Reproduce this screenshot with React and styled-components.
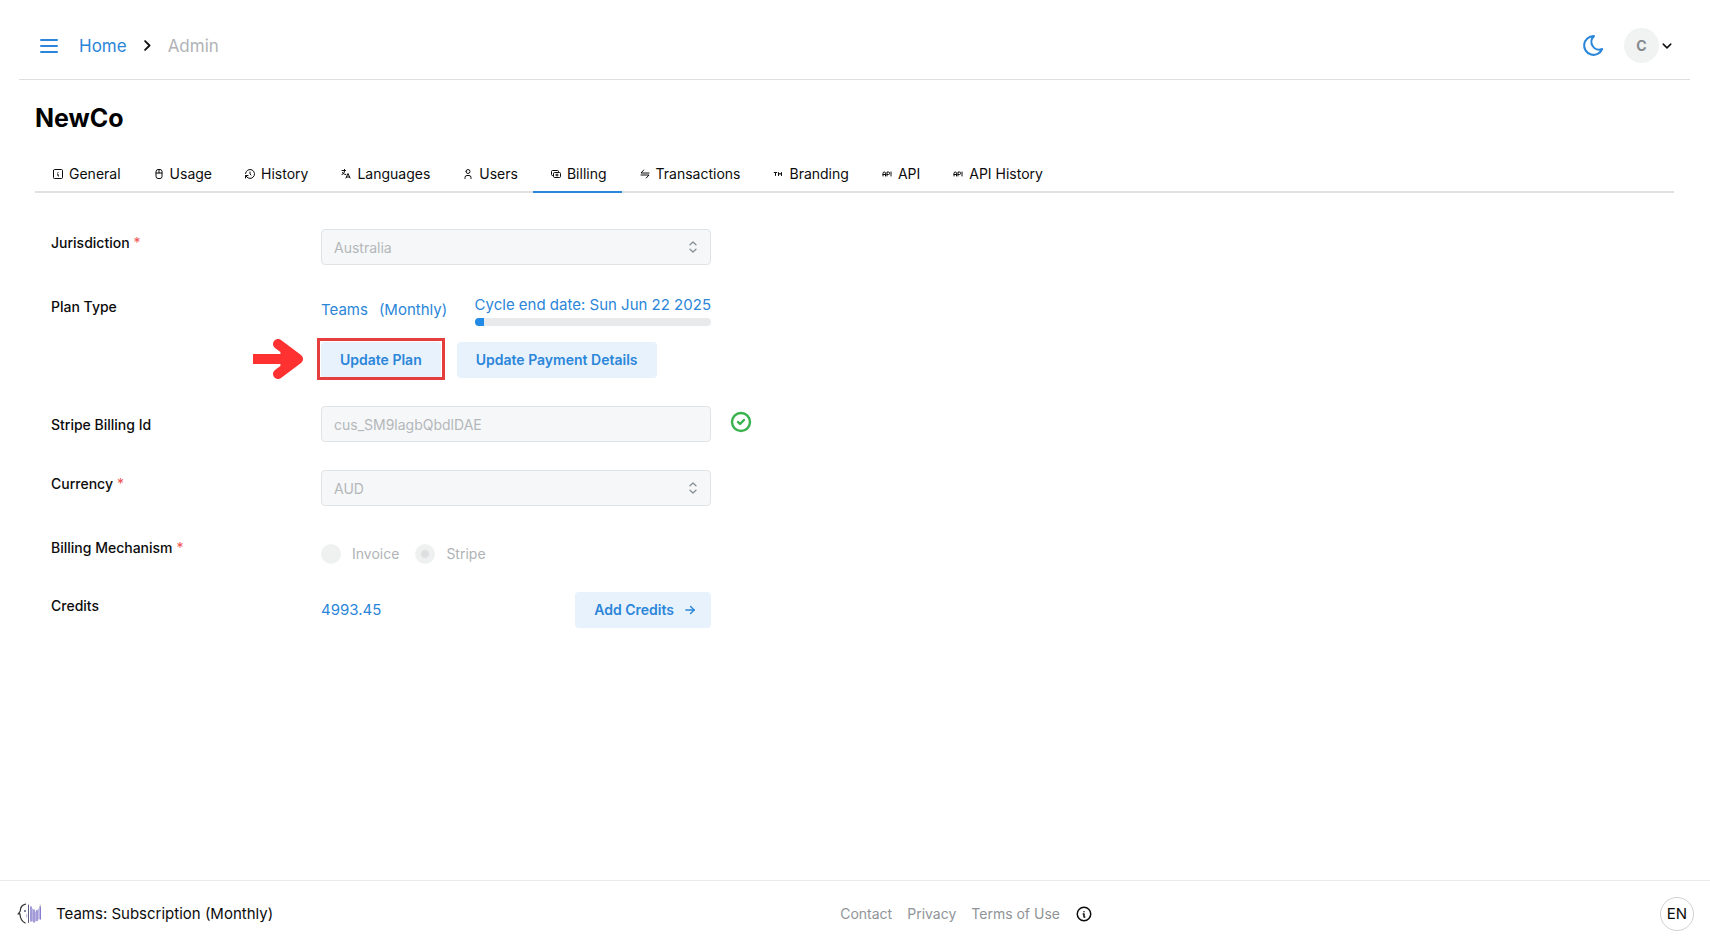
import React from "react";
import styled, { createGlobalStyle } from "styled-components";
import {
  TbInfoSquare, TbMouse2, TbHistory, TbLanguage, TbUser, TbCash, TbTransfer,
  TbTrademark, TbApi, TbInfoCircle, TbCircleCheck, TbArrowRight, TbMoon,
} from "react-icons/tb";

const blue = "#2b86d9";
const lightBlue = "#e8f2fc";
const muted = "#b0b3b6";

const GlobalStyle = createGlobalStyle`
  *, *::before, *::after { box-sizing: border-box; }
  body {
    margin: 0;
    background: #fff;
    color: #0c0c0c;
    font-family: Inter, "Liberation Sans", sans-serif;
    font-size: 14px;
    line-height: 22px;
  }
  button, select, input { font: inherit; }
  a { color: inherit; text-decoration: none; }
  svg { display: block; flex: none; }
`;

const Page = styled.div`
  min-height: 100vh;
  display: flex;
  flex-direction: column;
`;

const Header = styled.header`
  display: flex;
  align-items: center;
  justify-content: space-between;
  height: 80px;
  margin: 0 20px 0 19px;
  padding: 12px 18px 0 20px;
  border-bottom: 1px solid #dedfe0;
`;

const Group = styled.div`
  display: flex;
  align-items: center;
  gap: ${(p) => p.$gap}px;
`;

const IconButton = styled.button`
  display: flex;
  align-items: center;
  padding: 0;
  border: 0;
  background: none;
  color: ${(p) => p.$color || "#0c0c0c"};
  cursor: pointer;
`;

const Breadcrumbs = styled.nav`
  display: flex;
  align-items: center;
  gap: 15px;
  font-size: 17px;
  line-height: 26px;
  color: ${muted};
  a { color: ${blue}; }
`;

const UserButton = styled(IconButton)`
  gap: 3px;
`;

const Avatar = styled.span`
  display: flex;
  align-items: center;
  justify-content: center;
  width: 35px;
  height: 35px;
  border-radius: 50%;
  background: #f1f2f2;
  color: #868a8d;
  font-weight: 700;
`;

const Main = styled.main`
  flex: 1;
  padding: 22px 36px 36px 35px;
`;

const Title = styled.h1`
  margin: 0 0 21px;
  font-size: 25px;
  line-height: 32px;
  font-weight: 700;
  color: #000;
`;

const TabList = styled.div`
  display: flex;
  border-bottom: 2px solid #dfe1e3;
`;

const Tab = styled.button`
  display: flex;
  align-items: center;
  gap: 5px;
  height: 38px;
  margin-bottom: -2px;
  padding: 2px 15px 0 17px;
  border: 0;
  border-bottom: 2px solid ${(p) => (p.$active ? blue : "transparent")};
  background: none;
  color: #0c0c0c;
  white-space: nowrap;
  cursor: pointer;
`;

const Form = styled.form`
  display: flex;
  flex-direction: column;
  gap: 28px;
  padding: 36px 16px 0;
`;

const Row = styled.div`
  display: grid;
  grid-template-columns: 270px 390px auto;
  justify-content: start;
  align-items: ${(p) => (p.$center ? "center" : "start")};
`;

const Label = styled.label`
  padding-top: ${(p) => (p.$flush ? 1 : 3)}px;
  font-weight: 500;
`;

const Required = styled.span`
  margin-left: 4px;
  color: #f05252;
  font-weight: 400;
`;

const SelectWrap = styled.div`
  display: flex;
  align-items: center;
  position: relative;
  svg {
    position: absolute;
    right: 10px;
    pointer-events: none;
  }
`;

const fieldStyle = `
  width: 100%;
  height: 36px;
  margin: 0;
  padding: 1px 12px 0;
  border: 1px solid #e0e3e6;
  border-radius: 4px;
  background: #f6f7f9;
  color: #b4b7ba;
  opacity: 1;
`;

const Select = styled.select`
  ${fieldStyle}
  appearance: none;
`;

const Input = styled.input`
  ${fieldStyle}
`;

const Verified = styled.span`
  margin: 0 0 4px 18px;
  color: #37b24d;
`;

const Stack = styled.div`
  display: flex;
  flex-direction: column;
  gap: 16px;
`;

const Between = styled.div`
  display: flex;
  align-items: center;
  justify-content: space-between;
`;

const BlueText = styled.span`
  font-size: 15px;
  line-height: 24px;
  color: ${blue};
  white-space: nowrap;
`;

const Cycle = styled.div`
  display: grid;
  gap: 1px;
`;

const Track = styled.div`
  height: 8px;
  border-radius: 4px;
  background: #e9eaec;
  overflow: hidden;
`;

const Bar = styled.div`
  height: 100%;
  background: #228be6;
`;

const Button = styled.button`
  display: flex;
  align-items: center;
  gap: ${(p) => (p.$withIcon ? 9 : 0)}px;
  height: 36px;
  padding: 0 ${(p) => (p.$withIcon ? 14 : 19)}px 0 19px;
  border: 0;
  border-radius: 4px;
  background: ${lightBlue};
  color: ${blue};
  font-weight: 600;
  white-space: nowrap;
  cursor: pointer;
`;

const Highlight = styled.div`
  position: relative;
  &::after {
    content: "";
    position: absolute;
    inset: -4px -4px -2px;
    border: 3px solid #e53e3e;
    pointer-events: none;
  }
`;

const Pointer = styled.svg`
  position: absolute;
  right: calc(100% + 18px);
  top: -3px;
`;

const Radios = styled.div`
  display: flex;
  gap: 16px;
  padding-top: 10px;
`;

const RadioLabel = styled.label`
  display: flex;
  align-items: center;
  gap: 11px;
  height: 20px;
  color: ${muted};
`;

const Radio = styled.input`
  appearance: none;
  width: 20px;
  height: 20px;
  margin: 0;
  border-radius: 50%;
  background: #eff1f1;
  &:checked {
    background: radial-gradient(circle, #dcdfe0 3px, #eff1f1 5px);
  }
`;

const Footer = styled.footer`
  display: flex;
  align-items: center;
  justify-content: space-between;
  height: 65px;
  padding: 2px 16px 0 17px;
  border-top: 1px solid #e9eaeb;
`;

const PlanName = styled.span`
  font-size: 15px;
  line-height: 24px;
`;

const FooterLinks = styled.nav`
  display: flex;
  align-items: center;
  gap: 15px;
  color: #909497;
`;

const Language = styled.button`
  width: 34px;
  height: 34px;
  padding: 0;
  border: 1px solid #ced1d4;
  border-radius: 50%;
  background: #fff;
  color: #0c0c0c;
  font-size: 15px;
`;

const tabs = [
  ["General", TbInfoSquare],
  ["Usage", TbMouse2],
  ["History", TbHistory],
  ["Languages", TbLanguage],
  ["Users", TbUser],
  ["Billing", TbCash],
  ["Transactions", TbTransfer],
  ["Branding", TbTrademark],
  ["API", TbApi],
  ["API History", TbApi],
];

const Chevron = ({ size, d, width }) => (
  <svg width={size} height={size} viewBox="0 0 16 16" fill="none" stroke="#111" strokeWidth={width} strokeLinecap="round" strokeLinejoin="round">
    <path d={d} />
  </svg>
);

const MenuIcon = () => (
  <svg width="20" height="20" viewBox="0 0 20 20" stroke="currentColor" strokeWidth="2" strokeLinecap="round">
    <path d="M2 4h16M2 10h16M2 16h16" />
  </svg>
);

const Selector = () => (
  <svg width="16" height="16" viewBox="0 0 16 16" fill="none" stroke="#868e96" strokeWidth="1.3" strokeLinecap="round" strokeLinejoin="round">
    <path d="M5 5.8 8 3l3 2.8M5 10.2 8 13l3-2.800" />
  </svg>
);

const Logo = () => (
  <svg width="25" height="22" viewBox="0 0 25 22" fill="none" strokeLinecap="round" aria-hidden="true">
    <path d="M8.500 1.200C5.200 2 3.500 4.300 3.300 7.500c0 1.300-1.300 2.200-2 3.300h1.600c.3 4.500 1.900 7.700 5.300 9.200" stroke="#333" strokeWidth="1.200" />
    <circle cx="8" cy="8" r=".9" fill="#4a4a70" />
    <path d="M11.500 2v17.500" stroke="#4d4a78" strokeWidth=".9" />
    <path d="M14 4v14M17 7v12M20 7.500v10M23.200 4v12" stroke="#6f66c4" strokeWidth="1.300" />
    <path d="M9.700 11.500v2.500M15.500 6v12M18.500 9v9M21.600 6v10" stroke="#a8a2dc" strokeWidth=".8" />
    <path d="M23.200 2v2" stroke="#aaa" strokeWidth=".8" />
  </svg>
);

const SelectField = ({ id, value }) => (
  <SelectWrap>
    <Select id={id} defaultValue={value} disabled>
      <option>{value}</option>
    </Select>
    <Selector />
  </SelectWrap>
);

export default function App() {
  return (
    <Page>
      <GlobalStyle />
      <Header>
        <Group $gap={20}>
          <IconButton $color={blue} aria-label="Menu"><MenuIcon /></IconButton>
          <Breadcrumbs aria-label="Breadcrumb">
            <a href="#home">Home</a>
            <Chevron size={11} d="M4.500 1.500l6.500 6.500-6.500 6.500" width={2.6} />
            <span>Admin</span>
          </Breadcrumbs>
        </Group>
        <Group $gap={18}>
          <IconButton $color={blue} aria-label="Dark mode"><TbMoon size={25} /></IconButton>
          <UserButton aria-label="Account">
            <Avatar>C</Avatar>
            <Chevron size={10} d="M2 5l6 6 6-6" width={2.4} />
          </UserButton>
        </Group>
      </Header>

      <Main>
        <Title>NewCo</Title>
        <TabList role="tablist">
          {tabs.map(([name, Icon]) => (
            <Tab key={name} role="tab" aria-selected={name === "Billing"} $active={name === "Billing"}>
              <Icon size={12} />
              {name}
            </Tab>
          ))}
        </TabList>

        <Form>
          <Row>
            <Label htmlFor="jurisdiction">Jurisdiction<Required>*</Required></Label>
            <SelectField id="jurisdiction" value="Australia" />
          </Row>
          <Row>
            <Label as="div">Plan Type</Label>
            <Stack>
              <Between>
                <Group $gap={11}>
                  <BlueText>Teams</BlueText>
                  <BlueText>(Monthly)</BlueText>
                </Group>
                <Cycle>
                  <BlueText>Cycle end date: Sun Jun 22 2025</BlueText>
                  <Track role="progressbar" aria-label="Billing cycle" aria-valuenow={4}>
                    <Bar style={{ width: "4%" }} />
                  </Track>
                </Cycle>
              </Between>
              <Group $gap={16}>
                <Highlight>
                  <Pointer width="50" height="40" viewBox="0 0 50 40" fill="none" stroke="#ff3131" aria-hidden="true">
                    <path d="M0 20h40" strokeWidth="10" />
                    <path d="M25 5l20 15-20 15" strokeWidth="10" strokeLinecap="round" strokeLinejoin="round" />
                    <path d="M28 13l10 7-10 7z" fill="#ff3131" />
                  </Pointer>
                  <Button type="button">Update Plan</Button>
                </Highlight>
                <Button type="button">Update Payment Details</Button>
              </Group>
            </Stack>
          </Row>
          <Row $center>
            <Label $flush htmlFor="stripe-id">Stripe Billing Id</Label>
            <Input id="stripe-id" defaultValue="cus_SM9lagbQbdlDAE" disabled />
            <Verified><TbCircleCheck size={24} strokeWidth={2.4} /></Verified>
          </Row>
          <Row>
            <Label htmlFor="currency">Currency<Required>*</Required></Label>
            <SelectField id="currency" value="AUD" />
          </Row>
          <Row>
            <Label as="div" id="mechanism">Billing Mechanism<Required>*</Required></Label>
            <Radios role="radiogroup" aria-labelledby="mechanism">
              <RadioLabel><Radio type="radio" name="mechanism" disabled />Invoice</RadioLabel>
              <RadioLabel><Radio type="radio" name="mechanism" defaultChecked disabled />Stripe</RadioLabel>
            </Radios>
          </Row>
          <Row>
            <Label as="div">Credits</Label>
            <Between>
              <BlueText>4993.45</BlueText>
              <Button type="button" $withIcon>Add Credits<TbArrowRight size={14} strokeWidth={2.4} /></Button>
            </Between>
          </Row>
        </Form>
      </Main>

      <Footer>
        <Group $gap={14}>
          <Logo />
          <PlanName>Teams: Subscription (Monthly)</PlanName>
        </Group>
        <FooterLinks>
          <a href="#contact">Contact</a>
          <a href="#privacy">Privacy</a>
          <a href="#terms">Terms of Use</a>
          <IconButton aria-label="About"><TbInfoCircle size={18} /></IconButton>
        </FooterLinks>
        <Language>EN</Language>
      </Footer>
    </Page>
  );
}
